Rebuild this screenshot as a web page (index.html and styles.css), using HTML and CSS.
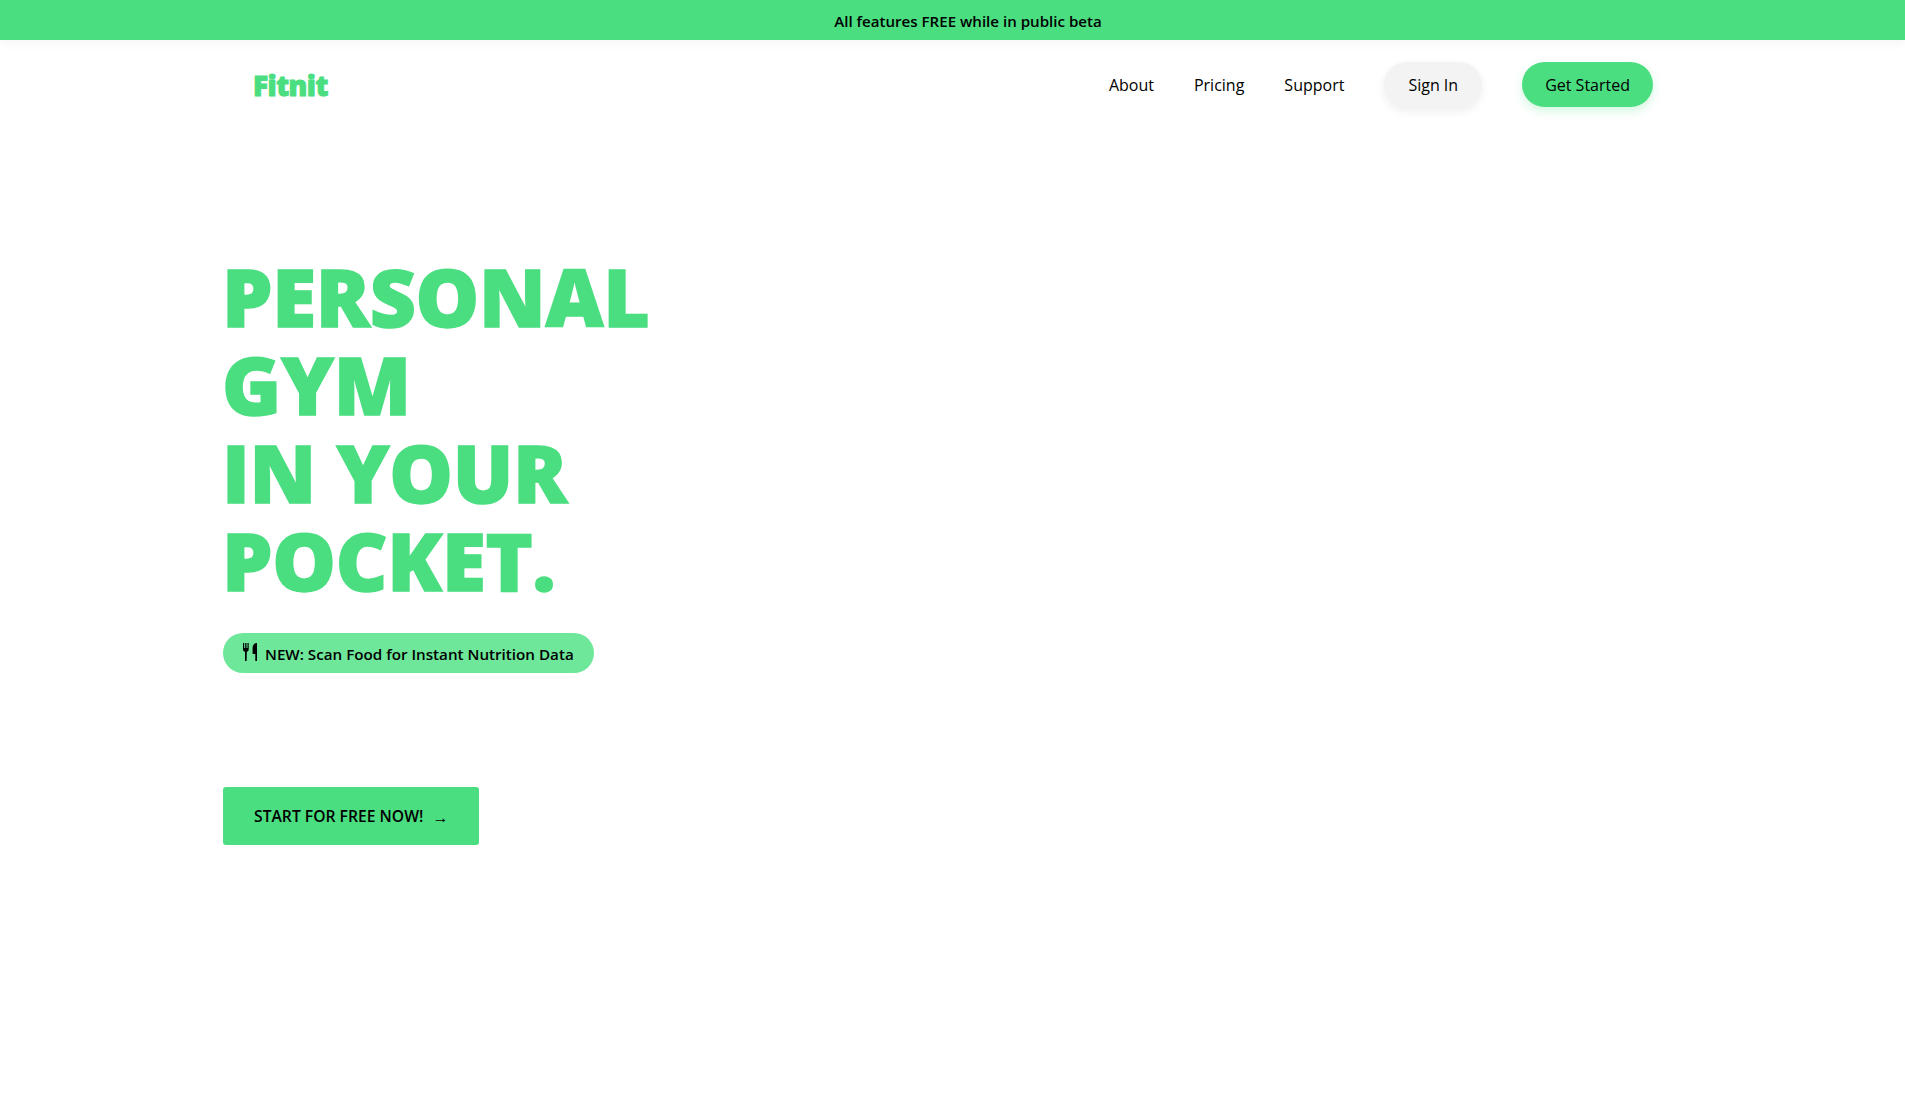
FILE: index.html
```html
<!DOCTYPE html>
<html lang="en">
<head>
<meta charset="utf-8">
<title>Fitnit</title>
<link rel="stylesheet" href="styles.css">
</head>
<body>
<div class="banner">All features FREE while in public beta</div>
<header class="nav">
  <a class="logo" href="#">Fitnit</a>
  <nav class="links">
    <a href="#">About</a>
    <a href="#">Pricing</a>
    <a href="#">Support</a>
    <a class="pill pill-grey" href="#">Sign In</a>
    <a class="pill pill-green" href="#">Get Started</a>
  </nav>
</header>
<main class="hero">
  <h1>PERSONAL<br>GYM<br>IN YOUR<br>POCKET.</h1>
  <div class="badge">
    <svg class="fork" viewBox="0 0 16 18" aria-hidden="true"><path d="M1 0h1.200v5h1V0h1.300v5h1V0h1.200v6.200c0 1.300-.8 2.200-1.900 2.500L4.600 18H3L3 8.700C1.800 8.400 1 7.500 1 6.200z"/><path d="M15 0v18h-1.700v-7H10.600V5C10.600 2 12.500 0 15 0z"/></svg>
    <span>NEW: Scan Food for Instant Nutrition Data</span>
  </div>
  <a class="cta" href="#"><span>START FOR FREE NOW!</span><span class="arrow">→</span></a>
</main>
</body>
</html>
```
FILE: styles.css
```css
* { box-sizing: border-box; }
html, body { margin: 0; padding: 0; }
body {
  min-height: 1117px;
  background: #fff;
  color: #000;
  font-family: "Open Sans", "Noto Sans", "Liberation Sans", sans-serif;
  font-size: 16px;
}
a { color: inherit; text-decoration: none; }
.banner {
  height: 40px;
  background: #4ade80;
  display: flex;
  align-items: center;
  justify-content: center;
  padding: 1px 0 0 31px;
  font-size: 15.1px;
  font-weight: 600;
  box-shadow: 0 4px 10px rgba(0,0,0,.04);
}
.nav {
  width: 1430px;
  margin-left: 223px;
  height: 88px;
  padding-left: 30px;
  display: flex;
  align-items: center;
  justify-content: space-between;
}
.logo {
  padding-top: 2px;
  color: #4ade80;
  font-weight: 800;
  font-size: 28px;
  -webkit-text-stroke: 1px #4ade80;
  letter-spacing: -.5px;
}
.links { display: flex; align-items: center; gap: 40px; font-weight: 500; }
.links a { padding-top: 2px; }
.pill {
  height: 45px;
  padding: 0 24px;
  border-radius: 23px;
  display: flex;
  align-items: center;
}
.pill-grey { background: #f3f3f3; box-shadow: 0 4px 10px rgba(0,0,0,.07); }
.pill-green { padding: 0 23px; background: #4ade80; box-shadow: 0 4px 10px rgba(74,222,128,.25); }
.hero {
  margin-left: 223px;
  padding-top: 124px;
  display: flex;
  flex-direction: column;
  align-items: flex-start;
}
h1 {
  margin: 0 0 0 -1px;
  color: #4ade80;
  font-weight: 800;
  font-size: 80px;
  line-height: 88px;
  letter-spacing: -.3px;
  -webkit-text-stroke: 1.5px #4ade80;
}
.badge {
  margin-top: 29px;
  height: 40px;
  padding: 0 20px 0 19px;
  border-radius: 20px;
  background: #6ee79a;
  display: flex;
  align-items: center;
  gap: 7px;
  font-size: 15.2px;
  font-weight: 600;
}
.badge span { padding-top: 2px; }
.fork { width: 16px; height: 18px; fill: #000; margin-top: -3px; }
.cta {
  margin-top: 114px;
  height: 58px;
  padding: 0 31px;
  border-radius: 3px;
  background: #4ade80;
  display: flex;
  align-items: center;
  gap: 9px;
  font-size: 15.7px;
  font-weight: 600;
}
.arrow { font-family: "Liberation Sans", sans-serif; font-size: 16px; padding-top: 3px; }
```
